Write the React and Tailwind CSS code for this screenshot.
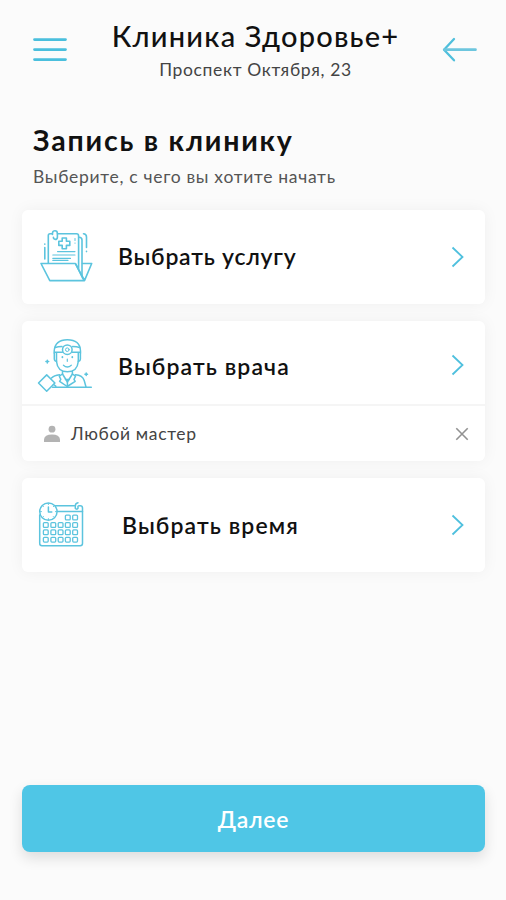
import React from 'react';

const FolderIcon = () => (
  <svg width="56" height="56" viewBox="0 0 56 56" fill="none" stroke="#5cc4de" strokeWidth="1.6" strokeLinecap="round" strokeLinejoin="round">
    <path d="M9.3 34V6.5Q9.3 4.8 11 4.8H13M18.5 4.8H37.5Q39.6 4.8 39.6 7V40" />
    <path d="M40 8.3Q43 8.3 43 11V47" />
    <path d="M44.5 4.8Q47.5 5 47.5 8V18.5M47.5 22.3V22.6" />
    <path d="M5.8 18.5V30M5.8 15V15.2" />
    <path d="M13.5 5.5V3.8Q13.8 1.8 16 1.8Q18.4 1.8 18.4 4.4V8.3Q18.2 10.4 16.3 10.4Q14.4 10.2 14.4 8.3" />
    <path d="M23.2 9H27.4V12.2H30.8V16.4H27.4V19.7H23.2V16.4H19.8V12.2H23.2Z" />
    <path d="M36 9.5V11.5M36 14V14.3" strokeWidth="1" />
    <path d="M18.5 22.6H36M13.8 26H36M13.8 29.4H31.5M13.8 31.4H29" strokeWidth="1.1" />
    <path d="M2 34.5H36.3L45.3 51M2 34.5L10.8 51.6H45.5L52.7 34.5H43.5" />
    <path d="M36.8 35L44 50" />
  </svg>
);

const DoctorIcon = () => (
  <svg width="56" height="56" viewBox="0 0 56 56" fill="none" stroke="#5cc4de" strokeWidth="1.5" strokeLinecap="round" strokeLinejoin="round">
    <path d="M17.2 16V14Q18 2.8 30.3 2.8Q43 2.8 43.5 14V16" />
    <path d="M18.2 10.5Q21 9.8 25 9.6M35.6 9.6Q40 9.8 42.6 10.5M18 15.2H25.3M35.3 15.2H43" />
    <circle cx="30.3" cy="12.7" r="4.8" />
    <circle cx="30.3" cy="12.7" r="1.8" strokeWidth="1" />
    <path d="M17.3 16V22Q17.5 24.2 19.6 24.3M43.4 16V22Q43.2 24.2 41.2 24.3" />
    <path d="M19.5 16V24.5Q20.5 34.8 30.4 34.8Q40.3 34.8 41.3 24.5V16" />
    <path d="M25.4 20V20.3M35.3 20V20.3" strokeWidth="1.8" />
    <path d="M30.3 22V24.3M26.4 28.2Q30.3 31.8 34.3 28.2" strokeWidth="1.2" />
    <path d="M25.5 34.5V37L30.4 45L35.4 37V34.5" />
    <path d="M25.5 37L22.3 39.2L23.8 42.4L22.6 44.4L30.2 49.5L38.2 44.4L37 42.4L38.5 39.2L35.4 37" />
    <path d="M28.5 42.5H32.3M30.4 45V49.5" />
    <path d="M14.5 41Q17 38.5 22.5 37.8M38.5 37.8Q45.5 38.3 47.2 43.5L49 50" />
    <path d="M9.7 37.9L17.9 46L9.7 54.2L1.5 46Z" />
    <path d="M15.5 50.3H54.3M16.4 47.4L18.8 49" />
    <path d="M10.3 23.2V26M8.9 24.6H11.7M49.2 36V38.6M47.9 37.3H50.5" />
  </svg>
);

const cells = [
  [29.7, 16.5], [37, 16.5],
  [7.7, 24], [15.2, 24], [22.5, 24], [29.7, 24], [37, 24],
  [7.7, 31.3], [15.2, 31.3], [22.5, 31.3], [29.7, 31.3], [37, 31.3],
  [7.7, 38.7], [15.2, 38.7], [22.5, 38.7], [29.7, 38.7], [37, 38.7],
];

const CalendarIcon = () => (
  <svg width="48" height="48" viewBox="0 0 48 48" fill="none" stroke="#5cc4de" strokeWidth="1.5" strokeLinecap="round" strokeLinejoin="round">
    <path d="M1.7 14V42.5Q1.7 44.7 4 44.7H42.2Q44.5 44.7 44.5 42.5V7Q44.5 4.8 42.2 4.8H40.8M36.4 4.8H17.5" />
    <path d="M19.5 10.6H44.5" />
    <path d="M40 1.8Q37.3 2.3 37.3 5V7.3Q38.5 9 40 7.2V5.2" />
    <circle cx="10.4" cy="10.6" r="8.7" />
    <path d="M10.4 6V11H13.8" />
    <path d="M10.4 2.6V3.6M10.4 17.6V18.6M2.5 10.6H3.5M17.4 10.6H18.4M5 5.2L5.5 5.7M15.8 5.2L15.3 5.7M5 16L5.5 15.5M15.8 16L15.3 15.5" strokeWidth="0.9" />
    {cells.map(([x, y]) => (
      <rect key={`${x}-${y}`} x={x - 2.3} y={y - 2.4} width="4.8" height="4.8" rx="1" strokeWidth="1.3" />
    ))}
  </svg>
);

const Chevron = () => (
  <svg className="shrink-0" width="14" height="22" viewBox="0 0 14 22" fill="none" stroke="#4fc0de" strokeWidth="1.8">
    <path d="M1.5 1.5L11.5 11L1.5 20.5" />
  </svg>
);

const App = () => {
  return (
    <div className="flex h-[900px] w-[506px] flex-col overflow-hidden bg-[#fbfbfb] pl-[22px] pr-[21px] font-['Lato','Open_Sans',sans-serif] text-[#111]">
      <header className="flex h-[120px] items-start justify-between pl-[11px] pr-2">
        <button className="mt-[37px]" aria-label="Меню">
          <svg width="34" height="25" viewBox="0 0 34 25" stroke="#4abfdd" strokeWidth="2.8" strokeLinecap="round">
            <path d="M1.5 2.6H32.5M1.5 12.6H32.5M1.5 22.6H32.5" />
          </svg>
        </button>
        <div className="flex flex-col items-center pl-0.5 whitespace-nowrap">
          <h1 className="mt-[19px] text-[29px] leading-[34px] font-medium tracking-[1.2px]">Клиника Здоровье+</h1>
          <p className="mt-1.5 text-[17.5px] leading-[22px] tracking-[0.65px] text-[#444]">Проспект Октября, 23</p>
        </div>
        <button className="mt-[37px]" aria-label="Назад">
          <svg width="35" height="25" viewBox="0 0 35 25" fill="none" stroke="#4fbfdc" strokeWidth="2.3" strokeLinecap="round" strokeLinejoin="round">
            <path d="M12 2L2 12.7L12 23.3" />
            <path d="M2.5 12.7H33.5" stroke="#6dc6de" strokeWidth="2.7" />
          </svg>
        </button>
      </header>

      <div className="h-[90px] pl-[11px] whitespace-nowrap">
        <h2 className="pt-[3px] text-[28.5px] leading-[34px] font-bold tracking-[1.8px]">Запись в клинику</h2>
        <p className="mt-[9px] text-[17.5px] leading-[22px] tracking-[0.7px] text-[#555]">Выберите, с чего вы хотите начать</p>
      </div>

      <div className="flex flex-col gap-[17px]">
        <div className="flex h-[94px] items-center rounded-md bg-white pr-5 pl-[17px] shadow-[0_0_16px_rgba(0,0,0,0.05)]">
          <FolderIcon />
          <span className="ml-[23px] flex-1 pb-0.5 text-[23px] font-semibold tracking-[0.75px]">Выбрать услугу</span>
          <Chevron />
        </div>

        <div className="rounded-md bg-white shadow-[0_0_16px_rgba(0,0,0,0.05)]">
          <div className="flex h-[85px] items-center border-b-2 border-[#f5f5f5] pt-1 pr-5 pl-[15px]">
            <DoctorIcon />
            <span className="ml-[25px] flex-1 pt-1 text-[23px] font-semibold tracking-[1.1px]">Выбрать врача</span>
            <Chevron />
          </div>
          <div className="flex h-[55px] items-center pr-4 pl-[21px]">
            <svg width="18" height="18" viewBox="0 0 18 18" fill="#b3b3b3">
              <circle cx="9" cy="4.2" r="3.4" />
              <path d="M1 17V14.5Q1.5 9.5 9 9.5Q16.5 9.5 17 14.5V17Z" />
            </svg>
            <span className="ml-2.5 flex-1 pt-0.5 text-[17.5px] tracking-[0.65px] text-[#444]">Любой мастер</span>
            <svg width="14" height="14" viewBox="0 0 14 14" stroke="#929292" strokeWidth="1.6">
              <path d="M1.3 1.3L12.7 12.7M12.7 1.3L1.3 12.7" />
            </svg>
          </div>
        </div>

        <div className="flex h-[94px] items-center rounded-md bg-white pr-5 pl-4 shadow-[0_0_16px_rgba(0,0,0,0.05)]">
          <CalendarIcon />
          <span className="ml-9 flex-1 text-[23px] font-semibold tracking-[1.1px]">Выбрать время</span>
          <Chevron />
        </div>
      </div>

      <button className="mt-auto mb-12 h-[67px] shrink-0 rounded-lg bg-[#4fc6e6] pt-0.5 text-[23px] font-semibold tracking-[0.7px] text-white shadow-[0_6px_14px_rgba(0,0,0,0.12)]">
        Далее
      </button>
    </div>
  );
};

export default App;
